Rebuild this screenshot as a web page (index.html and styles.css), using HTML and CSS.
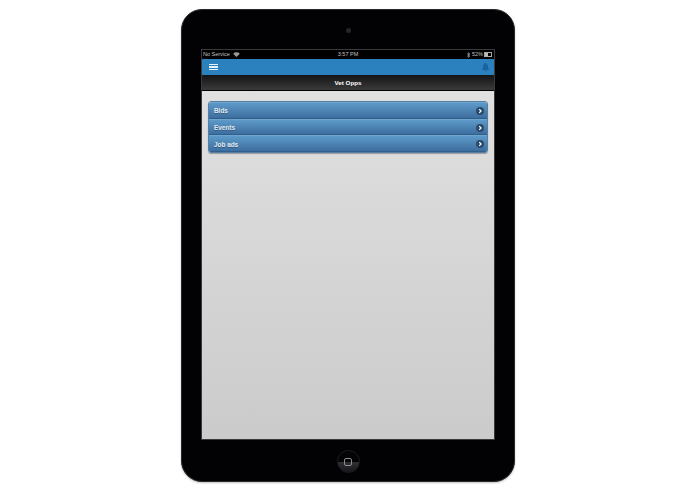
FILE: index.html
```html
<!DOCTYPE html>
<html lang="en">
<head>
<meta charset="utf-8">
<title>Vet Opps</title>
<link rel="stylesheet" href="styles.css">
</head>
<body>
<div class="device">
  <div class="bezel-top"><span class="camera"></span></div>
  <div class="screen">
    <div class="status">
      <div class="status-left"><span>No Service</span>
        <svg class="wifi" width="7" height="5" viewBox="0 0 8 6"><path d="M4 6 0 2a5.700 5.700 0 0 1 8 0z" fill="#9a9a9a"/></svg>
      </div>
      <div class="status-time">3:57 PM</div>
      <div class="status-right">
        <svg class="bt" width="3" height="6" viewBox="0 0 3 6"><path d="M0 1.500 3 4 1.500 5.500V.5L3 2 0 4.500" fill="none" stroke="#aaa" stroke-width=".6"/></svg>
        <span>52%</span>
        <span class="battery"><span class="battery-fill"></span></span>
      </div>
    </div>
    <div class="appbar">
      <div class="burger"><span></span><span></span><span></span></div>
      <svg class="bell" width="7" height="9" viewBox="0 0 7 9"><path d="M3.500 0C2.600 0 2.400.6 2.300 1 1.200 1.500 1 2.600 1 4c0 1.300-.4 1.900-1 2.500V7h7v-.5C6.400 5.900 6 5.300 6 4c0-1.400-.2-2.500-1.300-3C4.600.6 4.400 0 3.500 0zM2.500 7.500a1 1 0 0 0 2 0z" fill="#1b639c"/></svg>
    </div>
    <div class="titlebar">Vet Opps</div>
    <div class="content">
      <ul class="list">
        <li class="row"><span>Bids</span><span class="go"><svg width="8" height="8" viewBox="0 0 9 9"><path d="M3.600 2.400 5.700 4.500 3.600 6.600" fill="none" stroke="#fff" stroke-width="1.400"/></svg></span></li>
        <li class="row"><span>Events</span><span class="go"><svg width="8" height="8" viewBox="0 0 9 9"><path d="M3.600 2.400 5.700 4.500 3.600 6.600" fill="none" stroke="#fff" stroke-width="1.400"/></svg></span></li>
        <li class="row"><span>Job ads</span><span class="go"><svg width="8" height="8" viewBox="0 0 9 9"><path d="M3.600 2.400 5.700 4.500 3.600 6.600" fill="none" stroke="#fff" stroke-width="1.400"/></svg></span></li>
      </ul>
    </div>
  </div>
  <div class="bezel-bottom"><div class="home"><span class="home-square"></span></div></div>
</div>
</body>
</html>
```
FILE: styles.css
```css
* { box-sizing: border-box; }
html, body { margin: 0; padding: 0; background: #fff; }
body {
  width: 695px;
  height: 494px;
  overflow: hidden;
  display: flex;
  justify-content: center;
  font-family: "Liberation Sans", Arial, sans-serif;
}
.device {
  width: 334px;
  height: 473px;
  margin: 9px 0 0 1px;
  padding: 0 21px;
  background: #020204;
  border-radius: 21px;
  border: 1px solid #2a2a2c;
  box-shadow: 0 1px 2px rgba(0, 0, 0, .25);
  display: flex;
  flex-direction: column;
}
.bezel-top {
  height: 40px;
  flex: none;
  display: flex;
  justify-content: center;
  padding-top: 18px;
}
.camera {
  width: 5px;
  height: 5px;
  border-radius: 50%;
  background: #25262d;
}
.screen {
  width: 292px;
  height: 389px;
  margin-left: -1px;
  flex: none;
  outline: 1px solid #3a3a3a;
  background: #000;
  display: flex;
  flex-direction: column;
}
.status {
  height: 9px;
  flex: none;
  padding: 0 2px 0 1px;
  display: flex;
  align-items: center;
  justify-content: space-between;
  position: relative;
  color: #c0c0c0;
  font-size: 5.500px;
  line-height: 9px;
}
.status-left { display: flex; align-items: center; gap: 3px; }
.status-right { display: flex; align-items: center; gap: 1px; }
.bt { margin-right: 1px; }
.status-time {
  position: absolute;
  left: 0;
  right: 0;
  text-align: center;
}
.battery {
  width: 8px;
  height: 5px;
  border: 1px solid #aaa;
  display: block;
}
.battery-fill { display: block; width: 3px; height: 3px; background: #bbb; }
.appbar {
  height: 16px;
  flex: none;
  background: #2b80be;
  display: flex;
  align-items: center;
  justify-content: space-between;
  padding: 0 5px 0 7px;
}
.burger { width: 9px; display: flex; flex-direction: column; gap: 1px; }
.burger span { height: 1.500px; background: #e6f1f9; display: block; }
.titlebar {
  height: 16px;
  flex: none;
  background: linear-gradient(#141414, #3a3a3a);
  border-bottom: 1px solid #000;
  color: #fff;
  font-size: 6.200px;
  font-weight: 700;
  line-height: 15px;
  text-align: center;
}
.content {
  flex: 1;
  padding: 10px 6px 0;
  background: linear-gradient(#e0e0e0, #cbcbcb);
}
.list {
  list-style: none;
  margin: 0;
  padding: 0;
  border: 1px solid #5580a6;
  border-radius: 3px;
  box-shadow: 0 1px 1px rgba(0, 0, 0, .3);
  overflow: hidden;
}
.row {
  height: 16.700px;
  padding: 1px 3px 0 5px;
  display: flex;
  align-items: center;
  justify-content: space-between;
  background: linear-gradient(#5d9ac9, #3d6e9f);
  border-top: 1px solid #6fa4cd;
  border-bottom: 1px solid #2f5f8c;
  color: #e4ebf2;
  font-size: 6.400px;
  font-weight: 700;
  text-shadow: 0 1px 0 rgba(0, 0, 0, .3);
}
.go {
  width: 8px;
  height: 8px;
  border-radius: 50%;
  background: #2a4a6c;
  display: flex;
}
.bezel-bottom {
  flex: 1;
  display: flex;
  justify-content: center;
  padding-top: 11px;
}
.home {
  width: 23px;
  height: 23px;
  border-radius: 50%;
  border: 1px solid #1c1c1e;
  background: linear-gradient(#040406 50%, #303135 52%, #17171a);
  display: flex;
  align-items: center;
  justify-content: center;
}
.home-square {
  width: 8px;
  height: 8px;
  border: 1px solid #8e8e92;
  border-radius: 2px;
}
```
